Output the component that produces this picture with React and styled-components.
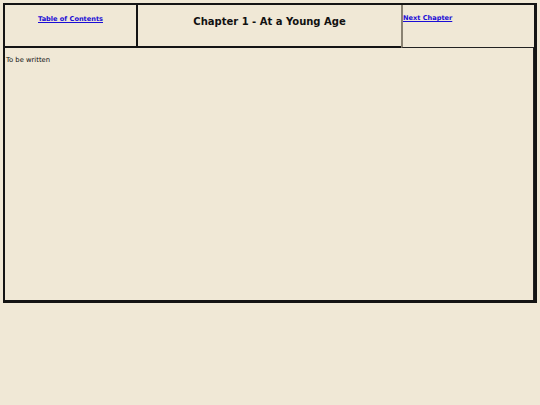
import styled, { createGlobalStyle } from "styled-components";

const GlobalStyle = createGlobalStyle`
  html, body {
    margin: 0;
    background: #f0e8d6;
  }
  body {
    padding: 3px;
    font-family: "DejaVu Sans", Verdana, sans-serif;
    font-size: 6.6px;
    color: #111;
  }
`

const Frame = styled.div`
  box-sizing: border-box;
  width: 534px;
  height: 300px;
  border-style: solid;
  border-color: #141414;
  border-width: 2px 3px 3px 2px;
  display: flex;
  flex-direction: column;
`

const Header = styled.div`
  display: flex;
  height: 43px;
  flex-shrink: 0;
`

const Cell = styled.div`
  box-sizing: border-box;
  width: ${(p) => p.width}px;
  height: 100%;
  text-align: ${(p) => p.align || "center"};
  border-bottom: ${(p) => (p.thin ? "1px solid #222" : "2px solid #141414")};
  border-right: ${(p) => (p.divider ? "2px solid #141414" : "none")};
  border-left: ${(p) => (p.soft ? "2px solid #8a8272" : "none")};
  padding-top: ${(p) => p.top}px;
`

const NavLink = styled.a`
  color: #1a0dd6;
  font-weight: bold;
  text-decoration: underline;
  line-height: 8px;
`

const Title = styled.h2`
  margin: 0;
  font-size: 10px;
  font-weight: bold;
  line-height: 12px;
  color: #111;
`

const Body = styled.div`
  flex: 1;
  border-right: 1px solid #222;
  padding: 8px 0 0 1px;
`

const Text = styled.p`
  margin: 0;
  font-size: 6.8px;
  line-height: 8px;
`

export default function App() {
  return (
    <>
      <GlobalStyle />
      <Frame>
        <Header>
          <Cell width={133} divider top={10}>
            <NavLink href="#">Table of Contents</NavLink>
          </Cell>
          <Cell width={263} top={11}>
            <Title>Chapter 1 - At a Young Age</Title>
          </Cell>
          <Cell width={133} soft thin align="left" top={9}>
            <NavLink href="#">Next Chapter</NavLink>
          </Cell>
        </Header>
        <Body>
          <Text>To be written</Text>
        </Body>
      </Frame>
    </>
  );
}
